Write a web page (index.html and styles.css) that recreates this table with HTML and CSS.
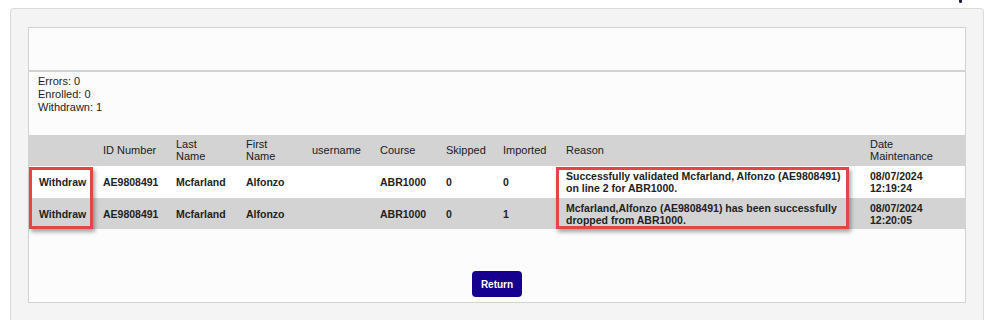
FILE: index.html
```html
<!DOCTYPE html>
<html lang="en">
<head>
    <meta charset="UTF-8">
    <title>Import Results</title>
    <link rel="stylesheet" href="styles.css">
</head>
<body>
    <div class="top-strip"><span class="caret-tail"></span></div>

    <div class="panel">
        <div class="results-box">
            <div class="results-header"></div>

            <div class="summary">
                <div>Errors: 0</div>
                <div>Enrolled: 0</div>
                <div>Withdrawn: 1</div>
            </div>

            <div class="table-wrap">
                <table class="results">
                    <colgroup>
                        <col style="width: 64px">
                        <col style="width: 73px">
                        <col style="width: 70px">
                        <col style="width: 66px">
                        <col style="width: 68px">
                        <col style="width: 66px">
                        <col style="width: 57px">
                        <col style="width: 63px">
                        <col style="width: 304px">
                        <col style="width: 105px">
                    </colgroup>
                    <thead>
                        <tr>
                            <th></th>
                            <th>ID Number</th>
                            <th>Last Name</th>
                            <th>First Name</th>
                            <th>username</th>
                            <th>Course</th>
                            <th>Skipped</th>
                            <th>Imported</th>
                            <th>Reason</th>
                            <th>Date Maintenance</th>
                        </tr>
                    </thead>
                    <tbody>
                        <tr>
                            <td>Withdraw</td>
                            <td>AE9808491</td>
                            <td>Mcfarland</td>
                            <td>Alfonzo</td>
                            <td></td>
                            <td>ABR1000</td>
                            <td>0</td>
                            <td>0</td>
                            <td class="reason">Successfully validated Mcfarland, Alfonzo (AE9808491) on line 2 for ABR1000.</td>
                            <td>08/07/2024 12:19:24</td>
                        </tr>
                        <tr class="alt">
                            <td>Withdraw</td>
                            <td>AE9808491</td>
                            <td>Mcfarland</td>
                            <td>Alfonzo</td>
                            <td></td>
                            <td>ABR1000</td>
                            <td>0</td>
                            <td>1</td>
                            <td class="reason">Mcfarland,Alfonzo (AE9808491) has been successfully dropped from ABR1000.</td>
                            <td>08/07/2024 12:20:05</td>
                        </tr>
                    </tbody>
                </table>

                <!-- highlight frames drawn over the table -->
                <div class="highlight highlight-action"></div>
                <div class="highlight highlight-reason"></div>
            </div>

            <div class="actions">
                <button class="button">Return</button>
            </div>
        </div>
    </div>
</body>
</html>
```

FILE: styles.css
```css
body {
    font-family: "Liberation Sans", Arial, sans-serif;
    background-color: #ffffff;
    margin: 0;
    padding: 0 8px 0 10px;
    color: #1e1e1e;
}
.top-strip {
    height: 8px;
    display: flex;
    justify-content: flex-end;
}
.caret-tail {
    width: 3px;
    height: 3px;
    margin-right: 22px;
    background-color: #1c1c3c;
    border-radius: 0 0 2px 2px;
}
.panel {
    background-color: #f4f4f4;
    border: 1px solid #dadada;
    border-bottom: none;
    border-radius: 4px 4px 0 0;
    padding: 18px 17px 17px;
}
.results-box {
    background-color: #fcfcfc;
    border: 1px solid #d2d2d2;
}
.results-header {
    height: 42px;
    border-bottom: 2px solid #d2d2d2;
}
.summary {
    padding: 3px 9px 0;
    font-size: 11px;
    line-height: 13px;
    color: #222;
}
.table-wrap {
    position: relative;
    margin-top: 21px;
}
.results {
    width: 936px;
    table-layout: fixed;
    border-collapse: collapse;
}
.results th {
    background-color: #d3d3d3;
    font-size: 11px;
    font-weight: normal;
    line-height: 12px;
    text-align: left;
    padding: 3px 8px 4px 10px;
    color: #1a1a1a;
}
.results td {
    font-size: 10.5px;
    font-weight: bold;
    line-height: 12px;
    padding: 4px 8px 4px 10px;
    background-color: #ffffff;
    color: #222;
}
.results tr.alt td {
    padding-bottom: 3px;
    background-color: #d3d3d3;
}
.highlight {
    position: absolute;
    top: 32px;
    height: 56px;
    border: 3px solid #e2464b;
    box-shadow: 2px 3px 4px rgba(0, 0, 0, 0.35);
}
.highlight-action {
    left: 0;
    width: 58px;
}
.highlight-reason {
    left: 527px;
    width: 287px;
}
.actions {
    display: flex;
    justify-content: center;
    padding: 42px 0 5px;
}
.button {
    height: 26px;
    padding: 0 9px;
    background-color: #15008f;
    color: white;
    border: none;
    border-radius: 4px;
    font-family: "Liberation Sans", Arial, sans-serif;
    font-size: 10px;
    font-weight: bold;
    cursor: pointer;
}
```
